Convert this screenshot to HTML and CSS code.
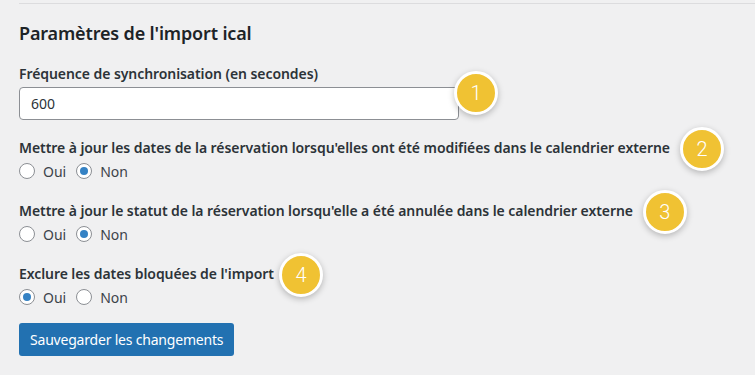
FILE: index.html
```html
<!DOCTYPE html>
<html lang="fr">
<head>
  <meta charset="UTF-8" />
  <meta name="viewport" content="width=device-width, initial-scale=1" />
  <title>Paramètres de l'import ical</title>
  <link rel="stylesheet" href="styles.css">
</head>
<body>
  <div class="rule"></div>
  <div class="wrap">
    <h2>Paramètres de l'import ical</h2>
    <form>
      <div class="field">
        <label for="syncFreq" class="field-label">Fréquence de synchronisation (en secondes)</label>
        <div class="input-row">
          <input type="text" id="syncFreq" name="syncFreq" value="600" />
          <span class="pin pin-input"><span class="badge">1</span></span>
        </div>
      </div>

      <div class="field">
        <div class="field-label">Mettre à jour les dates de la réservation lorsqu'elles ont été modifiées dans le calendrier externe<span class="pin"><span class="badge">2</span></span></div>
        <div class="choices">
          <label><input type="radio" name="updDates" value="1" /> Oui</label>
          <label><input type="radio" name="updDates" value="0" checked /> Non</label>
        </div>
      </div>

      <div class="field">
        <div class="field-label">Mettre à jour le statut de la réservation lorsqu'elle a été annulée dans le calendrier externe<span class="pin"><span class="badge">3</span></span></div>
        <div class="choices">
          <label><input type="radio" name="updStatus" value="1" /> Oui</label>
          <label><input type="radio" name="updStatus" value="0" checked /> Non</label>
        </div>
      </div>

      <div class="field">
        <div class="field-label">Exclure les dates bloquées de l'import<span class="pin pin-tight"><span class="badge">4</span></span></div>
        <div class="choices">
          <label><input type="radio" name="skipBlocked" value="1" checked /> Oui</label>
          <label><input type="radio" name="skipBlocked" value="0" /> Non</label>
        </div>
      </div>

      <button type="submit" class="btn">Sauvegarder les changements</button>
    </form>
  </div>
</body>
</html>
```

FILE: styles.css
```css
/* Fond et police */
body {
  margin: 0;
  background-color: #f0f0f1;
  font-family: "Noto Sans", sans-serif;
  color: #1d2327;
  font-size: 14px;
}

.rule {
  margin: 3px 0 0 19px;
  height: 1px;
  background-color: #dcdcde;
}

.wrap {
  padding: 0 19px;
}

h2 {
  margin: 0;
  padding-top: 18px;
  font-size: 18px;
  line-height: 22px;
  font-weight: 600;
  letter-spacing: -0.15px;
  color: #1d2327;
}

/* Champs */
.field {
  margin-top: 18px;
}

.field:first-child {
  margin-top: 20px;
}

.field-label {
  display: block;
  font-weight: 600;
  line-height: 20px;
  letter-spacing: -0.07px;
  color: #2c3338;
}

.input-row {
  display: flex;
  align-items: center;
  margin-top: 3px;
}

input[type="text"] {
  width: 440px;
  height: 33px;
  box-sizing: border-box;
  padding: 0 11px;
  border: 1px solid #8c8f94;
  border-radius: 4px;
  background-color: #fff;
  font-family: inherit;
  font-size: 14px;
  color: #2c3338;
}

.choices {
  display: flex;
  gap: 10px;
  height: 24px;
  align-items: center;
  margin-top: 1px;
  color: #3c434a;
}

.choices label {
  display: flex;
  align-items: center;
  gap: 8px;
}

input[type="radio"] {
  appearance: none;
  margin: 0;
  width: 16px;
  height: 16px;
  border: 1px solid #8c8f94;
  border-radius: 50%;
  background-color: #fff;
  box-sizing: border-box;
  display: grid;
  place-items: center;
}

input[type="radio"]:checked::before {
  content: "";
  width: 8px;
  height: 8px;
  border-radius: 50%;
  background-color: #3582c4;
}

/* Pastilles numérotées */
.pin {
  position: relative;
  display: inline-block;
  width: 0;
  height: 0;
  margin-left: 10px;
  vertical-align: middle;
}

.pin-tight {
  margin-left: 5px;
}

.pin-input {
  margin-left: -5px;
}

.badge {
  position: absolute;
  left: 0;
  top: -22px;
  width: 38px;
  height: 38px;
  border: 3px solid #fff;
  border-radius: 50%;
  background-color: #f0c233;
  color: #fff;
  font-family: Roboto, sans-serif;
  font-weight: 300;
  font-size: 20px;
  line-height: 38px;
  text-align: center;
  box-shadow: 0 2px 6px rgba(0, 0, 0, 0.25);
}

.pin-input .badge {
  top: -33px;
}

/* Bouton */
.btn {
  margin-top: 14px;
  height: 33px;
  padding: 0 11px;
  border: none;
  border-radius: 3px;
  background-color: #2271b1;
  color: #fff;
  font-family: inherit;
  font-size: 14px;
  letter-spacing: -0.2px;
  cursor: pointer;
}
```
